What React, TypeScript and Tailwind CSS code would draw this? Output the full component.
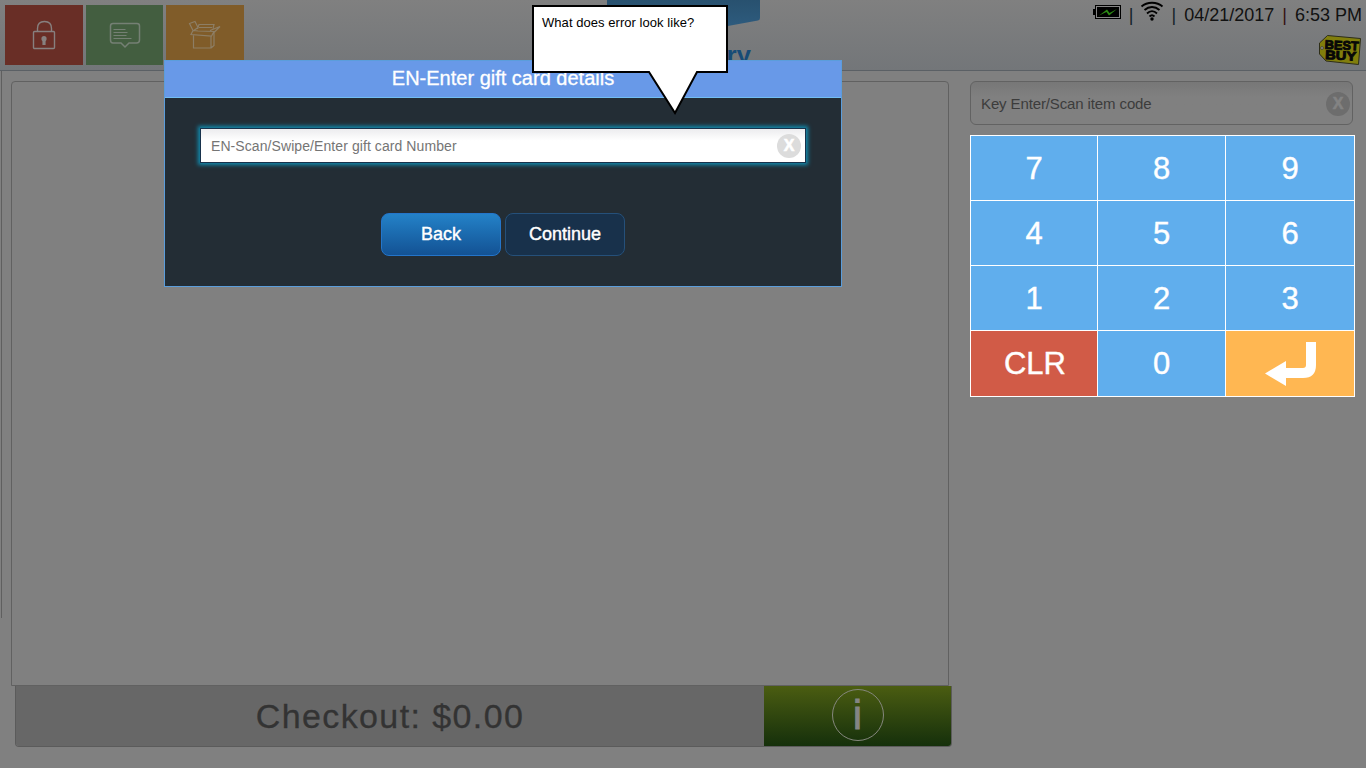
import React from "react";

const keys = ["7", "8", "9", "4", "5", "6", "1", "2", "3"];

function LockIcon() {
  return (
    <svg width="24" height="30" viewBox="0 0 24 30" fill="none" stroke="#87807f" strokeWidth="1.4">
      <rect x="1.500" y="11.500" width="21" height="17" rx="1" />
      <path d="M5.500 11V8.500C5.500 4 8 1.500 12.500 1.500S19.500 4 19.500 8.500V11" />
      <circle cx="12" cy="18.700" r="2.600" fill="#87807f" stroke="none" />
      <path d="M12 19v6" strokeWidth="3.200" />
    </svg>
  );
}

function ChatIcon() {
  return (
    <svg width="32" height="28" viewBox="0 0 32 28" fill="none" stroke="#758074" strokeWidth="1.500">
      <path d="M4 2.500h24q2.500 0 2.500 2.500v14q0 3-3 3H20l-4 4-4-4H4q-2.500 0-2.500-3V5q0-2.500 2.500-2.500Z" />
      <path d="M4.500 8.500h12M4.500 11.500h14M4.500 14.500h13M4.500 17.500h18" strokeWidth="1" />
    </svg>
  );
}

function BoxIcon() {
  return (
    <svg width="34" height="30" viewBox="0 0 34 30" fill="none" stroke="#8d7e65" strokeWidth="1.200">
      <path d="M5.500 15.500V28h17.500V16M5 10.500 3 14.500l20.500 1.500 2.500-4.500-16-.5ZM23 28l3-2.500V13M5 10.500 1.500 3.500l5.500-2 3 6-5 3.500M9.500 9l1.500-4.500h15l-1 4M11 7.500h13M22 10.500l10-4-6 6" />
    </svg>
  );
}

function StatusBar() {
  return (
    <div className="flex h-[30px] items-center text-lg leading-[30px] text-[#111]">
      <svg className="mb-1.5" width="28" height="15" viewBox="0 0 28 15">
        <rect x="0" y="4" width="3" height="6" fill="#000" />
        <rect x="2.500" y=".5" width="25" height="13" fill="#858585" stroke="#000" />
        <rect x="4" y="2" width="22" height="10" fill="#000" />
        <path d="m6 10.500 8-6 2.500 3.500L24 4l-8 6.500L13.500 7Z" fill="#2c8a14" />
      </svg>
      <span className="ml-2 text-[#142229]">|</span>
      <svg className="mb-2 ml-[7px]" width="24" height="20" viewBox="0 0 24 20" fill="none" stroke="#000" strokeWidth="1.800">
        <path d="M1.500 5.500C7 .5 17 .5 22.500 5.500M4.500 9C9 5 15 5 19.500 9M7 12.500c3-3 7-3 10 0M9.500 15.500c1.500-1.500 3.500-1.500 5 0" />
        <circle cx="12" cy="18" r="1.700" fill="#000" stroke="none" />
      </svg>
      <span className="ml-[7px] text-[#142229]">|</span>
      <span className="ml-2">04/21/2017</span>
      <span className="ml-2 text-[#341010]">|</span>
      <span className="ml-2">6:53 PM</span>
    </div>
  );
}

function BrandTag() {
  return (
    <svg width="44" height="32" viewBox="0 0 44 32">
      <path d="m9.500 1.500 33 3-2 26L8 27 1.500 20V9Z" fill="#817e0c" stroke="#2d2d18" />
      <circle cx="4" cy="14" r="1.500" fill="#8b8b87" stroke="#333" strokeWidth=".6" />
      <g fill="#070707" stroke="#070707" strokeWidth=".9" fontFamily="Liberation Sans, sans-serif" fontWeight="900" fontSize="12.500" transform="rotate(3 22 16)">
        <text x="6.500" y="15.500" textLength="34" lengthAdjust="spacingAndGlyphs">BEST</text>
        <text x="7.500" y="25.800" textLength="31" lengthAdjust="spacingAndGlyphs">BUY</text>
      </g>
    </svg>
  );
}

function Header() {
  return (
    <header className="flex h-[71px] border-b border-[#5b6065] bg-linear-to-b from-[#808080] to-[#737679]">
      <div className="flex gap-[3px] pt-[5px] pl-[5px]">
        <div className="flex h-[60px] w-[78px] items-center justify-center bg-[#692e26]"><LockIcon /></div>
        <div className="flex h-[60px] w-[77px] items-center justify-center bg-[#435e40]"><ChatIcon /></div>
        <div className="flex h-[60px] w-[78px] items-center justify-center bg-[#805c29]"><BoxIcon /></div>
      </div>
      <div className="ml-[363px] w-[153px]">
        <svg className="block" width="153" height="39" viewBox="0 0 153 39">
          <defs>
            <linearGradient id="banner" x2="0" y2="1">
              <stop offset="0" stopColor="#28516f" />
              <stop offset=".7" stopColor="#2d5a7c" />
            </linearGradient>
          </defs>
          <path d="M0 0h153v18q0 2-2 2.500L77 34 2 20.500q-2-.5-2-2.500Z" fill="url(#banner)" />
        </svg>
        <div className="w-[144px] text-right text-[26px] leading-[32px] font-bold text-[#174b76]">Query</div>
      </div>
      <div className="ml-auto flex flex-col items-end pr-1">
        <StatusBar />
        <div className="mt-1 h-8"><BrandTag /></div>
      </div>
    </header>
  );
}

function ClearBadge({ className }: { className: string }) {
  return <span className={"flex size-6 items-center justify-center rounded-full text-base leading-none font-bold [-webkit-text-stroke:0.6px] " + className}>X</span>;
}

function Keypad() {
  return (
    <div className="mt-[10px] grid h-[262px] w-[385px] grid-cols-[126px_127px_128px] grid-rows-[64px_64px_64px_65px] gap-px border border-white bg-white text-[31px] text-white [-webkit-text-stroke:0.4px]">
      {keys.map((k) => (
        <button key={k} className="bg-[#60aeed] pt-0.5">{k}</button>
      ))}
      <button className="bg-[#d15b47] pt-0.5 pl-0.5">CLR</button>
      <button className="bg-[#60aeed] pt-0.5">0</button>
      <button className="flex items-center justify-center bg-[#ffb752]">
        <svg className="ml-0.5" width="52" height="44" viewBox="0 0 52 44">
          <path d="M41 0h10v23q0 13-13 13H21v8L0 31.500 21 19v7h17q3 0 3-3Z" fill="#fff" />
        </svg>
      </button>
    </div>
  );
}

function GiftCardDialog() {
  return (
    <section className="absolute top-[60px] left-[164px] h-[227px] w-[678px] border border-[#5b9ddb] bg-[#232d35] text-white">
      <h2 className="h-[37px] border-b border-[#72bdf2] bg-[#6899e8] text-center text-xl leading-[34px] [-webkit-text-stroke:0.3px]">EN-Enter gift card details</h2>
      <div className="px-[35px] pt-[30px]">
        <div className="flex h-[35px] w-[606px] items-center justify-between border border-[#17324c] bg-linear-to-b from-[#ececee] via-white via-35% to-white pt-px pr-1 pl-[10px] shadow-[0_0_4px_2px_#118baf]">
          <span className="text-sm tracking-[0.08px] text-[#757575]">EN-Scan/Swipe/Enter gift card Number</span>
          <ClearBadge className="bg-[#dcdcdc] text-white" />
        </div>
      </div>
      <div className="mt-[50px] flex justify-center gap-1 text-lg [-webkit-text-stroke:0.4px]">
        <button className="h-[43px] w-[120px] rounded-lg border border-[#2475ca] bg-linear-to-b from-[#2482c8] to-[#135294] pb-0.5">Back</button>
        <button className="h-[43px] w-[120px] rounded-lg border border-[#25507a] bg-[#18314b] pb-0.5">Continue</button>
      </div>
    </section>
  );
}

function Callout() {
  return (
    <div className="absolute top-[5px] left-[532px] h-[110px] w-[196px]">
      <svg className="absolute inset-0" width="196" height="110" viewBox="0 0 196 110">
        <path d="M1 1h194v66h-30L143 108 117 67H1Z" fill="#fff" stroke="#000" strokeWidth="2" />
      </svg>
      <p className="relative pt-[9px] pl-[10px] text-[13px] leading-[18px] tracking-[0.05px] text-black">What does error look like?</p>
    </div>
  );
}

export default function App() {
  return (
    <div className="relative h-[768px] w-[1366px] overflow-hidden bg-[#808080] font-['Liberation_Sans',Arial,sans-serif]">
      <Header />
      <main className="flex">
        <div className="ml-px h-[547px] w-[10px] border-l border-[#5f5f5f]" />
        <div className="w-[941px] pt-[10px]">
          <div className="h-[605px] w-[938px] rounded-t border border-[#616161]" />
          <div className="ml-1 flex h-[61px] w-[937px] overflow-hidden rounded-b border-r border-b border-l border-[#5b5b5b]">
            <div className="w-[748px] bg-[#676767] text-center text-[34px] leading-[61px] tracking-[1.4px] text-[#333] [-webkit-text-stroke:0.3px]">Checkout: $0.00</div>
            <div className="flex flex-1 items-start justify-center bg-linear-to-b from-[#4b5d11] to-[#15300b] pt-[3px]">
              <div className="flex size-[52px] items-center justify-center rounded-full border border-[#85877d] text-[40px] leading-none text-[#858585] [-webkit-text-stroke:1px]">i</div>
            </div>
          </div>
        </div>
        <aside className="ml-[18px] pt-[10px]">
          <div className="flex h-11 w-[383px] items-center justify-between rounded-md border border-[#626262] bg-linear-to-b from-[#777] via-[#808080] via-35% to-[#808080] pt-0.5 pr-[2px] pl-[10px] text-[15px] text-[#3c3c3c]">
            <span className="tracking-[-0.12px]">Key Enter/Scan item code</span>
            <ClearBadge className="bg-[#6d6d6d] text-[#838383]" />
          </div>
          <Keypad />
        </aside>
      </main>
      <GiftCardDialog />
      <Callout />
    </div>
  );
}
